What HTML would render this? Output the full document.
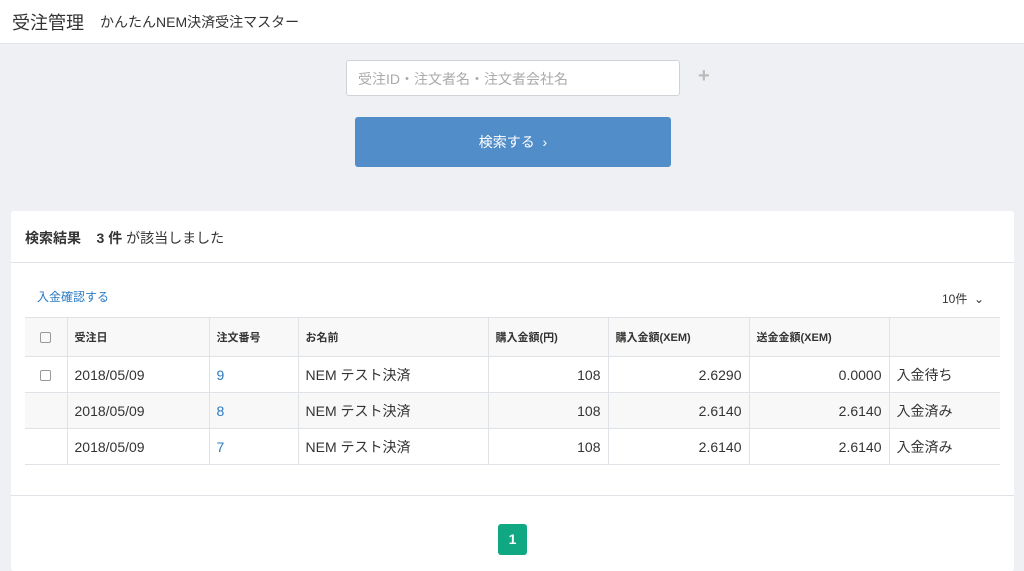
<!DOCTYPE html>
<html><head><meta charset="utf-8"><style>
*{margin:0;padding:0;box-sizing:border-box}
body{width:1024px;height:565px;overflow:hidden;background:#eef0f3;font-family:"Liberation Sans","Noto Sans CJK JP",sans-serif;color:#333;position:relative}
.hdr{position:absolute;left:0;top:0;width:1024px;height:44px;background:#fff;border-bottom:1px solid #dfe2e6}
.hdr .t{position:absolute;left:12px;top:9px;font-size:18px}
.hdr .s{position:absolute;left:100px;top:12px;font-size:14px}
.inp{position:absolute;left:346px;top:60px;width:334px;height:36px;background:#fff;border:1px solid #cfd3d8;border-radius:3px;font-size:14px;color:#aaa;padding:8px 11px}
.plus{position:absolute;left:698px;top:64px;font-size:20px;color:#bbb;font-weight:bold}
.btn{position:absolute;left:355px;top:117px;width:316px;height:50px;background:#518dc8;border-radius:3px;color:#fff;font-size:14px;text-align:center;line-height:50px}
.card{position:absolute;left:11px;top:211px;width:1003px;height:360px;background:#fff;border-radius:3px}
.ch{height:52px;border-bottom:1px solid #dfe2e6;padding:17px 14px;font-size:14px;font-weight:bold}
.link{position:absolute;left:26px;top:77px;font-size:12px;color:#2a7ac0}
.per{position:absolute;left:931px;top:79px;font-size:12px}
table{position:absolute;left:14px;top:106px;border-collapse:collapse;font-size:14px}
td,th{border-top:1px solid #dfe2e6;border-bottom:1px solid #dfe2e6;border-left:1px solid #dfe2e6;padding:0 7px;height:36px}
td:first-child,th:first-child{border-left:none;text-align:center}
th{height:39px;background:#f8f8f8;font-size:11px;text-align:left;font-weight:bold}
tr.g td{background:#f8f8f8}
.r{text-align:right}
.b{color:#2a7ac0}
.cb{display:inline-block;width:11px;height:11px;border:1px solid #999;border-radius:2px;vertical-align:middle}
.line{position:absolute;left:0;top:284px;width:1003px;border-top:1px solid #dfe2e6}
.pg{position:absolute;left:487px;top:313px;width:29px;height:31px;background:#10a882;border-radius:3px;color:#fff;font-weight:bold;font-size:14px;text-align:center;line-height:31px}
</style></head><body>
<div class="hdr"><span class="t">受注管理</span><span class="s">かんたんNEM決済受注マスター</span></div>
<div class="inp">受注ID・注文者名・注文者会社名</div>
<div class="plus" style="top:65px">+</div>
<div class="btn">検索する &nbsp;›</div>
<div class="card">
<div class="ch">検索結果 &nbsp;&nbsp;&nbsp;3 件 <span style="font-weight:normal">が該当しました</span></div>
<div class="link">入金確認する</div>
<div class="per">10件 &nbsp;⌄</div>
<table>
<tr><th style="width:42px"><span class="cb"></span></th><th style="width:142px">受注日</th><th style="width:89px">注文番号</th><th style="width:190px">お名前</th><th style="width:120px">購入金額(円)</th><th style="width:141px">購入金額(XEM)</th><th style="width:140px">送金金額(XEM)</th><th style="width:111px"></th></tr>
<tr><td><span class="cb"></span></td><td>2018/05/09</td><td class="b">9</td><td>NEM テスト決済</td><td class="r">108</td><td class="r">2.6290</td><td class="r">0.0000</td><td>入金待ち</td></tr>
<tr class="g"><td></td><td>2018/05/09</td><td class="b">8</td><td>NEM テスト決済</td><td class="r">108</td><td class="r">2.6140</td><td class="r">2.6140</td><td>入金済み</td></tr>
<tr><td></td><td>2018/05/09</td><td class="b">7</td><td>NEM テスト決済</td><td class="r">108</td><td class="r">2.6140</td><td class="r">2.6140</td><td>入金済み</td></tr>
</table>
<div class="line"></div>
<div class="pg">1</div>
</div>
</body></html>
